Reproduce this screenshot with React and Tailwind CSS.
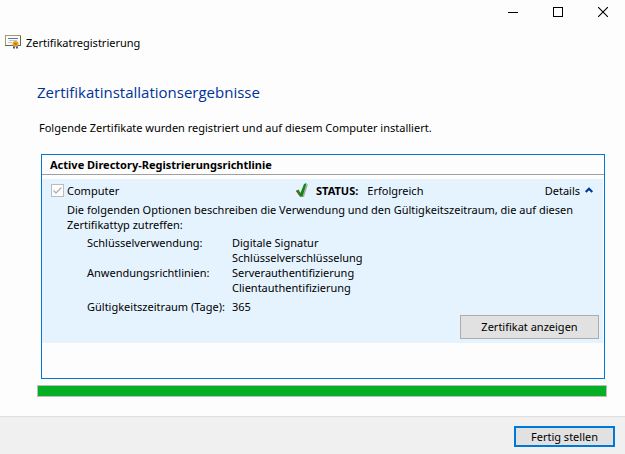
import { useState } from "react";

const usage = [
  { label: "Schlüsselverwendung:", values: ["Digitale Signatur", "Schlüsselverschlüsselung"] },
  { label: "Anwendungsrichtlinien:", values: ["Serverauthentifizierung", "Clientauthentifizierung"] },
];

function CertificateIcon() {
  return (
    <svg className="h-4 w-4 shrink-0" viewBox="0 0 16 16" aria-hidden="true">
      <rect x="0.5" y="1.5" width="15" height="10" fill="#fbfbf3" stroke="#a39b78" />
      <path d="M0 11.5h16M15.5 2v10" stroke="#6b6446" />
      <path d="M3 4.5h10" stroke="#5f74bd" />
      <path d="M4 6.5h8M3 8.5h4" stroke="#c3c7d6" />
      <path d="M8 11h2v4l-1-1-1 1zM11 11h2v4l-1-1-1 1z" fill="#1f62cf" />
      <circle cx="10.5" cy="10" r="3" fill="#e9a51a" />
      <circle cx="10.5" cy="10" r="1.3" fill="#c47f08" />
    </svg>
  );
}

function WindowButtons() {
  const button = "flex h-6 w-[45px] items-center justify-center";

  return (
    <div className="flex justify-end">
      <button type="button" aria-label="Minimieren" className={button}>
        <svg className="h-[10px] w-[10px]" viewBox="0 0 10 10" shapeRendering="crispEdges">
          <path d="M0 5.5h10" stroke="#000" />
        </svg>
      </button>
      <button type="button" aria-label="Maximieren" className={button}>
        <svg className="h-[10px] w-[10px]" viewBox="0 0 10 10" shapeRendering="crispEdges">
          <rect x="0.5" y="0.5" width="9" height="9" fill="none" stroke="#000" />
        </svg>
      </button>
      <button type="button" aria-label="Schließen" className={button}>
        <svg className="h-[10px] w-[10px]" viewBox="0 0 10 10">
          <path d="M0 0l10 10M10 0L0 10" stroke="#000" strokeWidth="1.1" />
        </svg>
      </button>
    </div>
  );
}

function StatusIcon() {
  return (
    <svg className="h-4 w-4 shrink-0" viewBox="0 0 16 16" aria-hidden="true">
      <path d="M4 10l2 3 4-10 3-1-4 13H6z" fill="#a9a9a9" />
      <path d="M1 9l2.500-1.500L5.500 11l3.500-9 2.500-1L7.500 14.500H5z" fill="#0c8a12" />
      <path d="M1 9l1.500-1L6 14.500H5z" fill="#7a5a2a" />
    </svg>
  );
}

export default function App() {
  const [open, setOpen] = useState(true);

  return (
    <div className="flex min-h-screen flex-col bg-[#fdfdfd] font-['Noto_Sans','Open_Sans',sans-serif] text-[11px] leading-[15px] text-black">
      <header>
        <WindowButtons />
        <div className="flex items-center gap-[5px] px-[5px] pt-[10px]">
          <CertificateIcon />
          <span>Zertifikatregistrierung</span>
        </div>
      </header>

      <main className="flex-1 pr-[18px] pb-[18px] pl-[37px]">
        <h1 className="pt-[31px] font-['Open_Sans','Noto_Sans',sans-serif] text-[15px] leading-[22px] text-[#003399]">
          Zertifikatinstallationsergebnisse
        </h1>
        <p className="pt-[17px] pl-[2px]">
          Folgende Zertifikate wurden registriert und auf diesem Computer installiert.
        </p>

        <section className="mt-[19px] mr-[2px] ml-1 border border-[#0078d7] pb-[35px]">
          <h2 className="border-b border-[#a0a0a0] px-2 pt-[2px] pb-[2px] font-bold">
            Active Directory-Registrierungsrichtlinie
          </h2>

          <div className="mt-1 mr-px bg-[#e5f3ff] pt-[3px] pr-1 pb-1 pl-[9px]">
            <div className="flex items-center">
              <label className="flex w-[244px] items-center gap-[3px]">
                <span className="relative flex">
                  <input
                    type="checkbox"
                    defaultChecked
                    disabled
                    className="h-[13px] w-[13px] appearance-none border border-[#bcbcbc] bg-[#fdfdfd]"
                  />
                  <svg className="absolute inset-0 h-[13px] w-[13px]" viewBox="0 0 13 13" fill="none" aria-hidden="true">
                    <path d="M2.5 6.5l2.5 2.5 5.5-5.5" stroke="#b0b0b0" strokeWidth="1.3" />
                  </svg>
                </span>
                Computer
              </label>
              <StatusIcon />
              <span className="ml-[5px] font-bold">STATUS:</span>
              <span className="ml-[9px]">Erfolgreich</span>
              <button
                type="button"
                aria-expanded={open}
                onClick={() => setOpen(!open)}
                className="mr-[6px] ml-auto flex items-center gap-[5px]"
              >
                Details
                <svg className="h-2 w-2" viewBox="0 0 8 8" fill="none" aria-hidden="true">
                  <path d="M0.7 6L4 2.8 7.300 6" stroke="#003399" strokeWidth="2.2" />
                </svg>
              </button>
            </div>

            {open && (
              <>
                <p className="pt-1 pl-4">
                  Die folgenden Optionen beschreiben die Verwendung und den Gültigkeitszeitraum, die auf diesen
                  Zertifikattyp zutreffen:
                </p>
                <dl className="grid grid-cols-[145px_1fr] pt-[3px] pb-px pl-9">
                  {usage.map((row) => (
                    <div key={row.label} className="contents">
                      <dt>{row.label}</dt>
                      <dd>
                        {row.values.map((value) => (
                          <div key={value}>{value}</div>
                        ))}
                      </dd>
                    </div>
                  ))}
                  <dt className="pt-1 whitespace-nowrap">Gültigkeitszeitraum (Tage):</dt>
                  <dd className="pt-1">365</dd>
                </dl>
              </>
            )}

            <div className="flex justify-end">
              <button
                type="button"
                className="h-6 w-[139px] border border-[#adadad] bg-[#e1e1e1] pb-[2px]"
              >
                Zertifikat anzeigen
              </button>
            </div>
          </div>
        </section>

        <div
          role="progressbar"
          aria-label="Registrierung"
          aria-valuenow={100}
          className="mt-[6px] h-3 border border-[#bcbcbc] bg-[#06b025]"
        />
      </main>

      <footer className="flex justify-end border-t border-[#dfdfdf] bg-[#f0f0f0] px-[10px] pt-[9px] pb-[7px]">
        <button
          type="button"
          className="h-[21px] w-[101px] border-2 border-[#0078d7] bg-[#e1e1e1]"
        >
          Fertig stellen
        </button>
      </footer>
    </div>
  );
}
